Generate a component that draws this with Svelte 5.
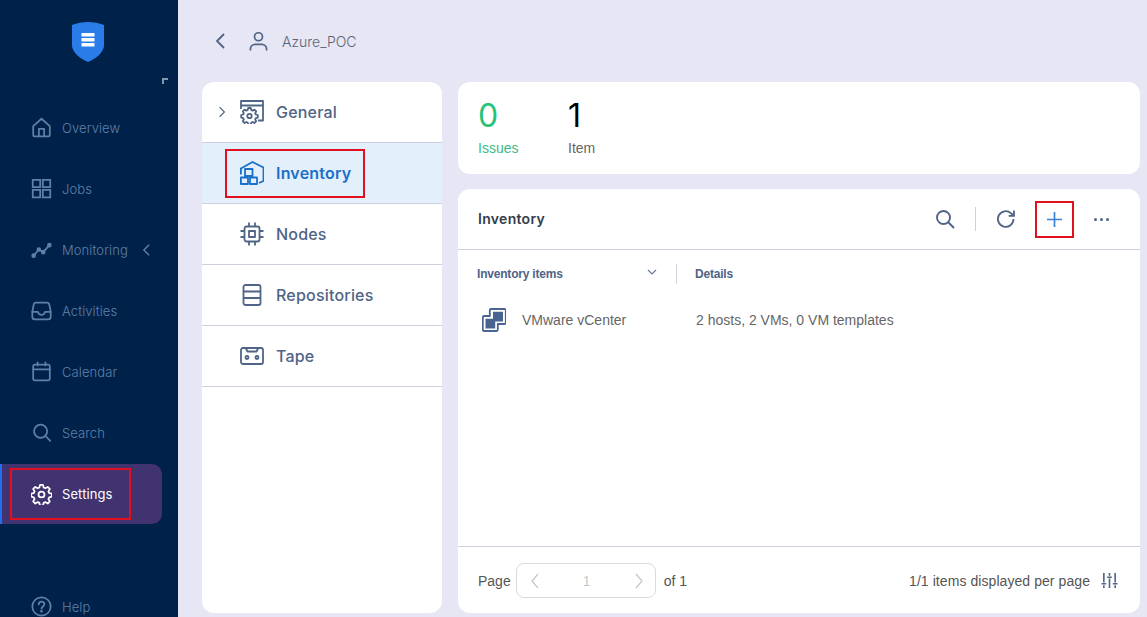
<script>
	const nav = [
		{ label: 'Overview', icon: 'home' },
		{ label: 'Jobs', icon: 'grid' },
		{ label: 'Monitoring', icon: 'chart', arrow: true },
		{ label: 'Activities', icon: 'inbox' },
		{ label: 'Calendar', icon: 'calendar' },
		{ label: 'Search', icon: 'search' },
		{ label: 'Settings', icon: 'gear', active: true }
	];

	const sections = [
		{ label: 'General', icon: 'general', arrow: true },
		{ label: 'Inventory', icon: 'inventory', active: true },
		{ label: 'Nodes', icon: 'chip' },
		{ label: 'Repositories', icon: 'repo' },
		{ label: 'Tape', icon: 'tape' }
	];

	const gearPath =
		'M10.300 1h3.400l.7 3 2 .9 2.700-1.600 2.400 2.400-1.600 2.700.9 2 3 .7v3.400l-3 .7-.9 2 1.600 2.700-2.400 2.400-2.700-1.600-2 .9-.7 3h-3.400l-.7-3-2-.9-2.700 1.600-2.400-2.400 1.600-2.700-.9-2-3-.7v-3.400l3-.7.9-2-1.600-2.700 2.400-2.400 2.700 1.600 2-.9z';
</script>

{#snippet navIcon(name)}
	<svg class="nav-icon" viewBox="0 0 24 24" fill="none" stroke="currentColor" stroke-width="2" stroke-linejoin="round" stroke-linecap="round">
		{#if name === 'home'}
			<path d="M2.500 10.500L12 2l9.500 8.500v10A1.500 1.500 0 0 1 20 22H4a1.500 1.500 0 0 1-1.500-1.500z" />
			<path d="M9 22v-8.500h6V22" />
		{:else if name === 'grid'}
			<path d="M2 2h8.500v8.500H2zM13.500 2H22v8.500h-8.500zM2 13.500h8.500V22H2zM13.500 13.500H22V22h-8.500z" stroke-linejoin="miter" />
		{:else if name === 'chart'}
			<path d="M3 19l6-7 5 3 7-8" />
			<circle cx="3" cy="19" r="1.600" fill="currentColor" />
			<circle cx="9" cy="12" r="1.600" fill="currentColor" />
			<circle cx="14" cy="15" r="1.600" fill="currentColor" />
			<circle cx="21" cy="7" r="1.600" fill="currentColor" />
		{:else if name === 'inbox'}
			<path d="M6 3h12a3 3 0 0 1 3 2.500l1.500 8V19a3 3 0 0 1-3 3h-15a3 3 0 0 1-3-3v-5.500L3 5.500A3 3 0 0 1 6 3z" />
			<path d="M1.500 13.500H8c.5 2.500 2 3.500 4 3.500s3.500-1 4-3.500h6.500" />
		{:else if name === 'calendar'}
			<rect x="2.500" y="4" width="19" height="18" rx="2" />
			<path d="M2.500 9.500h19M7.500 1.500V5M16.500 1.500V5" />
		{:else if name === 'search'}
			<circle cx="11" cy="10.500" r="7.500" />
			<path d="M16.500 16l5.500 5.500" />
		{:else if name === 'gear'}
			<path d={gearPath} />
			<circle cx="12" cy="12" r="3.400" />
		{/if}
	</svg>
{/snippet}

{#snippet sectionIcon(name)}
	<svg class="section-icon" viewBox="0 0 24 24" fill="none" stroke="currentColor" stroke-width="1.800" stroke-linejoin="round">
		{#if name === 'general'}
			<path d="M1 9V1h22v19.500h-5M1 5.500h22" />
			<path d="M8.200 8h2.600l.5 2 1.300.6 1.800-1 1.800 1.800-1 1.800.6 1.300 2 .5v2.600l-2 .5-.6 1.300 1 1.800-1.800 1.800-1.800-1-1.300.6-.5 2H8.200l-.5-2-1.300-.6-1.800 1-1.800-1.800 1-1.800-.6-1.300-2-.5v-2.600l2-.5.6-1.300-1-1.800 1.800-1.800 1.800 1 1.300-.6z" />
			<circle cx="9.500" cy="16" r="2.200" />
		{:else if name === 'inventory'}
			<path d="M.9 13.500v-6L12.500 1l11 5.500V20l-4.500 2" />
			<path d="M5 8h7.500v7H5zM.9 16.500H8V23H.9zM10 16.500h7V23h-7z" />
		{:else if name === 'chip'}
			<rect x="4.500" y="4.500" width="15" height="15" rx="2" />
			<rect x="9" y="9" width="6" height="6" />
			<path d="M9 .5v4M15 .5v4M9 19.500v4M15 19.500v4M.5 9h4M.5 15h4M19.500 9h4M19.500 15h4" />
		{:else if name === 'repo'}
			<rect x="3.500" y="2" width="17" height="20" rx="2" />
			<path d="M3.500 8.500h17M3.500 15h17" />
		{:else if name === 'tape'}
			<rect x="1" y="4" width="22" height="16" rx="2" />
			<path d="M6 4.500l1.500 3h9l1.500-3" />
			<circle cx="7" cy="13.500" r="1.500" />
			<circle cx="17" cy="13.500" r="1.500" />
		{/if}
	</svg>
{/snippet}

<div class="page">
	<aside class="sidebar">
		<div class="logo">
			<svg width="34" height="42" viewBox="0 0 34 42">
				<path d="M17 1c5 0 11 1 16 3v20c0 8-9 14-16 17C10 38 1 32 1 24V4c5-2 11-3 16-3z" fill="#2a7de9" />
				<path d="M10.500 12h13v3.500h-13zM10.500 17h13v3.500h-13zM10.500 22h13v3.500h-13z" fill="#fff" />
			</svg>
		</div>
		<div class="collapse-row"><span class="collapse"></span></div>
		<nav class="nav">
			{#each nav as item}
				<div class="nav-item" class:active={item.active}>
					{@render navIcon(item.icon)}
					<span>{item.label}</span>
					{#if item.arrow}
						<svg class="nav-arrow" viewBox="0 0 10 16" fill="none" stroke="currentColor" stroke-width="1.600"><path d="M8 2L2 8l6 6" /></svg>
					{/if}
					{#if item.active}<i class="mark mark-settings"></i>{/if}
				</div>
			{/each}
		</nav>
		<div class="help">
			<svg class="nav-icon" viewBox="0 0 24 24" fill="none" stroke="currentColor" stroke-width="2" stroke-linecap="round">
				<circle cx="12" cy="12" r="10.500" />
				<path d="M8.800 9.500C9 7.500 10.500 6.500 12 6.500c2 0 3.300 1.200 3.300 3 0 2.500-3.300 2.500-3.300 5" />
				<circle cx="12" cy="17.500" r=".6" fill="currentColor" />
			</svg>
			<span>Help</span>
		</div>
	</aside>

	<main class="main">
		<header class="topbar">
			<svg class="back" viewBox="0 0 12 18" fill="none" stroke="currentColor" stroke-width="1.800"><path d="M10 2L3 9l7 7" /></svg>
			<svg class="user" viewBox="0 0 20 20" fill="none" stroke="currentColor" stroke-width="1.800">
				<circle cx="10" cy="5.500" r="4.200" />
				<path d="M1.500 20v-1.500c0-3 2.500-5 5-5h7c2.500 0 5 2 5 5V20" />
			</svg>
			<span class="crumb">Azure_POC</span>
		</header>

		<div class="content">
			<section class="card side">
				{#each sections as s}
					<div class="section" class:active={s.active}>
						<span class="chev">
							{#if s.arrow}
								<svg viewBox="0 0 10 16" fill="none" stroke="currentColor" stroke-width="1.500"><path d="M2 2l6 6-6 6" /></svg>
							{/if}
						</span>
						{@render sectionIcon(s.icon)}
						<span class="section-label">{s.label}</span>
						{#if s.active}<i class="mark mark-inventory"></i>{/if}
					</div>
				{/each}
			</section>

			<div class="right">
				<section class="card stats">
					<div class="stat">
						<div class="num green">0</div>
						<div class="cap green-cap">Issues</div>
					</div>
					<div class="stat">
						<div class="num">1</div>
						<div class="cap">Item</div>
					</div>
				</section>

				<section class="card inventory">
					<div class="inv-head">
						<h2>Inventory</h2>
						<div class="tools">
							<svg class="tool search" viewBox="0 0 20 20" fill="none" stroke="currentColor" stroke-width="1.900"><circle cx="8.500" cy="8.500" r="6.500" /><path d="M13 13l6 6" /></svg>
							<span class="tool-sep"></span>
							<svg class="tool refresh" viewBox="0 0 20 20" fill="none" stroke="currentColor" stroke-width="1.800"><path d="M17.500 10a7.800 7.800 0 1 1-2.500-5.700l2.500 2" /><path d="M18 1.500v5.300h-5.300" /></svg>
							<div class="add">
								<svg viewBox="0 0 18 18" fill="none" stroke="#3b83d9" stroke-width="1.800"><path d="M9 1v16M1 9h16" /></svg>
							</div>
							<div class="dots"><b></b><b></b><b></b></div>
						</div>
					</div>

					<div class="table">
						<div class="thead">
							<div class="th first">
								<span>Inventory items</span>
								<svg viewBox="0 0 12 8" fill="none" stroke="currentColor" stroke-width="1.200"><path d="M2 2l4 4 4-4" /></svg>
							</div>
							<div class="th second">Details</div>
						</div>
						<div class="tr">
							<div class="td first">
								<svg class="vm" viewBox="0 0 24 24" fill="none" stroke="#4a6491" stroke-width="1.800" stroke-linejoin="round">
									<path d="M8 8V2.200A1.200 1.200 0 0 1 9.200 1h13.600A1.200 1.200 0 0 1 24 2.200V14.800A1.200 1.200 0 0 1 22.800 16H16v5.800A1.200 1.200 0 0 1 14.800 23H2.200A1.200 1.200 0 0 1 1 21.800V9.200A1.200 1.200 0 0 1 2.200 8z" transform="translate(-.2 0)" />
									<path d="M11 3.800h10v9.700H11zM3.500 10.800h9.700v9.700H3.500z" fill="#4a6491" stroke="none" />
								</svg>
								<span>VMware vCenter</span>
							</div>
							<div class="td second">2 hosts, 2 VMs, 0 VM templates</div>
						</div>
					</div>

					<footer class="pager">
						<span>Page</span>
						<div class="page-box">
							<svg viewBox="0 0 10 16" fill="none" stroke="currentColor" stroke-width="1.300"><path d="M8 1L2 8l6 7" /></svg>
							<span>1</span>
							<svg viewBox="0 0 10 16" fill="none" stroke="currentColor" stroke-width="1.300"><path d="M2 1l6 7-6 7" /></svg>
						</div>
						<span>of 1</span>
						<span class="per-page">1/1 items displayed per page</span>
						<svg class="sliders" viewBox="0 0 18 18" fill="none" stroke="#4f6486" stroke-width="1.700">
							<path d="M3 1v10M3 14v3M9 1v3M9 7v10M15 1v10M15 14v3M.5 12.500h5M6.500 5.500h5M12.500 12.500h5" />
						</svg>
					</footer>
				</section>
			</div>
		</div>
	</main>
</div>

<style>
	:global(body) {
		margin: 0;
		overflow: hidden;
	}

	.page {
		display: flex;
		width: 1147px;
		height: 617px;
		overflow: hidden;
		background: #e6e6f4;
		font-family: 'Liberation Sans', Arial, sans-serif;
	}

	.sidebar {
		width: 178px;
		flex: none;
		background: #00224a;
		color: #5f80a8;
		font-family: Inter, sans-serif;
		font-size: 13px;
		font-weight: 300;
		letter-spacing: 0.1px;
		display: flex;
		flex-direction: column;
	}

	.logo {
		flex: none;
		height: 64px;
		padding-top: 21px;
		display: flex;
		justify-content: center;
		padding-right: 3px;
		box-sizing: content-box;
	}

	.collapse-row {
		flex: none;
		height: 13px;
		padding: 0 0 0 162px;
	}

	.collapse {
		display: block;
		width: 6px;
		height: 6px;
		border-top: 2px solid #8296ad;
		border-left: 2px solid #8296ad;
		box-sizing: border-box;
		margin-top: -7px;
	}

	.nav {
		flex: none;
		display: flex;
		flex-direction: column;
		margin-top: -1px;
		padding-top: 1px;
	}

	.nav-item {
		position: relative;
		flex: none;
		height: 61px;
		display: flex;
		align-items: center;
		gap: 10px;
		padding-left: 31px;
		padding-bottom: 2px;
		box-sizing: border-box;
		width: 162px;
		border-top-right-radius: 10px;
		border-bottom-right-radius: 10px;
	}

	.nav-item.active {
		background: #41336f;
		color: #fff;
		height: 60px;
		border-left: 2px solid #1f6ff0;
		padding-left: 29px;
		padding-bottom: 0;
		font-weight: 400;
	}

	.nav-icon {
		width: 21px;
		height: 21px;
		flex: none;
	}

	.nav-arrow {
		width: 9px;
		height: 14px;
		margin-left: 4px;
	}

	.help {
		flex: none;
		margin-top: 72px;
		display: flex;
		align-items: center;
		gap: 10px;
		padding-left: 31px;
	}

	.mark {
		position: absolute;
		display: block;
		border: 2px solid #e0101e;
		box-sizing: border-box;
		pointer-events: none;
	}

	.mark-settings {
		left: 8px;
		top: 4px;
		width: 121px;
		height: 52px;
	}

	.mark-inventory {
		left: 23px;
		top: 6px;
		width: 140px;
		height: 49px;
	}

	.main {
		flex: 1;
		min-width: 0;
		display: flex;
		flex-direction: column;
		padding: 0 7px 4px 24px;
	}

	.topbar {
		height: 82px;
		flex: none;
		display: flex;
		align-items: center;
		color: #4f6486;
	}

	.back {
		width: 12px;
		height: 18px;
		margin-left: 12px;
	}

	.user {
		width: 19px;
		height: 20px;
		margin-left: 23px;
	}

	.crumb {
		margin-left: 14px;
		font-family: Inter, sans-serif;
		font-size: 14px;
		font-weight: 300;
		color: #5c6575;
	}

	.content {
		flex: 1;
		min-height: 0;
		display: flex;
		gap: 16px;
	}

	.card {
		background: #fff;
		border-radius: 12px;
	}

	.side {
		width: 240px;
		flex: none;
		padding-top: 0;
		overflow: hidden;
	}

	.section {
		position: relative;
		height: 61px;
		box-sizing: border-box;
		display: flex;
		align-items: center;
		padding-left: 16px;
		padding-bottom: 1px;
		border-bottom: 1px solid #cfd0de;
		color: #4f6486;
	}

	.section.active {
		background: #e4effc;
		color: #1a6fc9;
	}

	.chev {
		width: 8px;
		height: 14px;
		margin-right: 14px;
		display: block;
	}

	.chev svg {
		display: block;
		width: 8px;
		height: 14px;
	}

	.section-icon {
		width: 24px;
		height: 24px;
		flex: none;
	}

	.section-label {
		margin-left: 12px;
		font-size: 16px;
		font-family: Inter, sans-serif;
		font-weight: 500;
		letter-spacing: 0.2px;
	}

	.section.active .section-label {
		font-weight: 600;
	}

	.right {
		flex: 1;
		min-width: 0;
		display: flex;
		flex-direction: column;
		gap: 15px;
	}

	.stats {
		height: 92px;
		flex: none;
		display: flex;
		padding: 14px 0 0 20px;
		box-sizing: border-box;
	}

	.stat {
		width: 90px;
	}

	.num {
		font-family: Inter, sans-serif;
		font-size: 32px;
		line-height: 40px;
		color: #000;
		font-weight: 400;
	}

	.green {
		color: #24c377;
	}

	.cap {
		margin-top: 3px;
		font-size: 14px;
		line-height: 18px;
		color: #666;
	}

	.green-cap {
		color: #3dba85;
	}

	.inventory {
		flex: 1;
		min-height: 0;
		display: flex;
		flex-direction: column;
	}

	.inv-head {
		height: 61px;
		flex: none;
		box-sizing: border-box;
		display: flex;
		align-items: center;
		justify-content: space-between;
		padding: 0 31px 0 20px;
		border-bottom: 1px solid #cfd0de;
	}

	h2 {
		margin: 0 0 1px;
		font-size: 14px;
		font-family: Inter, sans-serif;
		font-weight: 600;
		letter-spacing: 0.3px;
		color: #333c4a;
	}

	.tools {
		display: flex;
		align-items: center;
		color: #4f6486;
	}

	.tool {
		display: block;
	}

	.search {
		width: 20px;
		height: 20px;
	}

	.tool-sep {
		width: 1px;
		height: 24px;
		background: #cfd0de;
		margin: 0 20px;
	}

	.refresh {
		width: 20px;
		height: 20px;
		margin-right: 19px;
	}

	.add {
		width: 39px;
		height: 37px;
		box-sizing: border-box;
		border: 2px solid #e0101e;
		display: flex;
		align-items: center;
		justify-content: center;
	}

	.add svg {
		width: 17px;
		height: 17px;
	}

	.dots {
		display: flex;
		gap: 3px;
		margin-left: 20px;
	}

	.dots b {
		display: block;
		width: 3px;
		height: 3px;
		border-radius: 50%;
		background: #4f6486;
	}

	.table {
		flex: 1;
		min-height: 0;
	}

	.thead {
		display: flex;
		height: 47px;
		align-items: center;
	}

	.th {
		font-size: 12px;
		font-weight: 700;
		letter-spacing: -0.2px;
		color: #4f6486;
	}

	.first {
		width: 219px;
		box-sizing: border-box;
		padding-left: 19px;
	}

	.th.first {
		display: flex;
		align-items: center;
		justify-content: space-between;
		padding-right: 18px;
		height: 20px;
		border-right: 1px solid #d4d5e0;
	}

	.th.first svg {
		width: 12px;
		height: 8px;
		margin-top: -3px;
		color: #6a7b96;
	}

	.th.second {
		padding-left: 18px;
	}

	.tr {
		display: flex;
		align-items: center;
		height: 46px;
		font-size: 14px;
		color: #666;
	}

	.td.first {
		display: flex;
		align-items: center;
		gap: 16px;
		padding-left: 24px;
	}

	.td.second {
		padding-left: 19px;
	}

	.vm {
		width: 24px;
		height: 24px;
		flex: none;
	}

	.pager {
		height: 67px;
		flex: none;
		box-sizing: border-box;
		display: flex;
		align-items: center;
		padding: 1px 22px 0 20px;
		border-top: 1px solid #cfd0de;
		font-size: 14px;
		color: #555;
	}

	.page-box {
		width: 140px;
		height: 35px;
		box-sizing: border-box;
		margin: 0 8px 0 5px;
		border: 1px solid #dadada;
		border-radius: 8px;
		display: flex;
		align-items: center;
		justify-content: space-between;
		padding: 0 11px 0 13px;
		color: #c8c8c8;
	}

	.page-box svg {
		width: 10px;
		height: 16px;
	}

	.per-page {
		margin-left: auto;
		margin-right: 11px;
		letter-spacing: 0.07px;
	}

	.sliders {
		width: 17px;
		height: 17px;
	}
</style>
